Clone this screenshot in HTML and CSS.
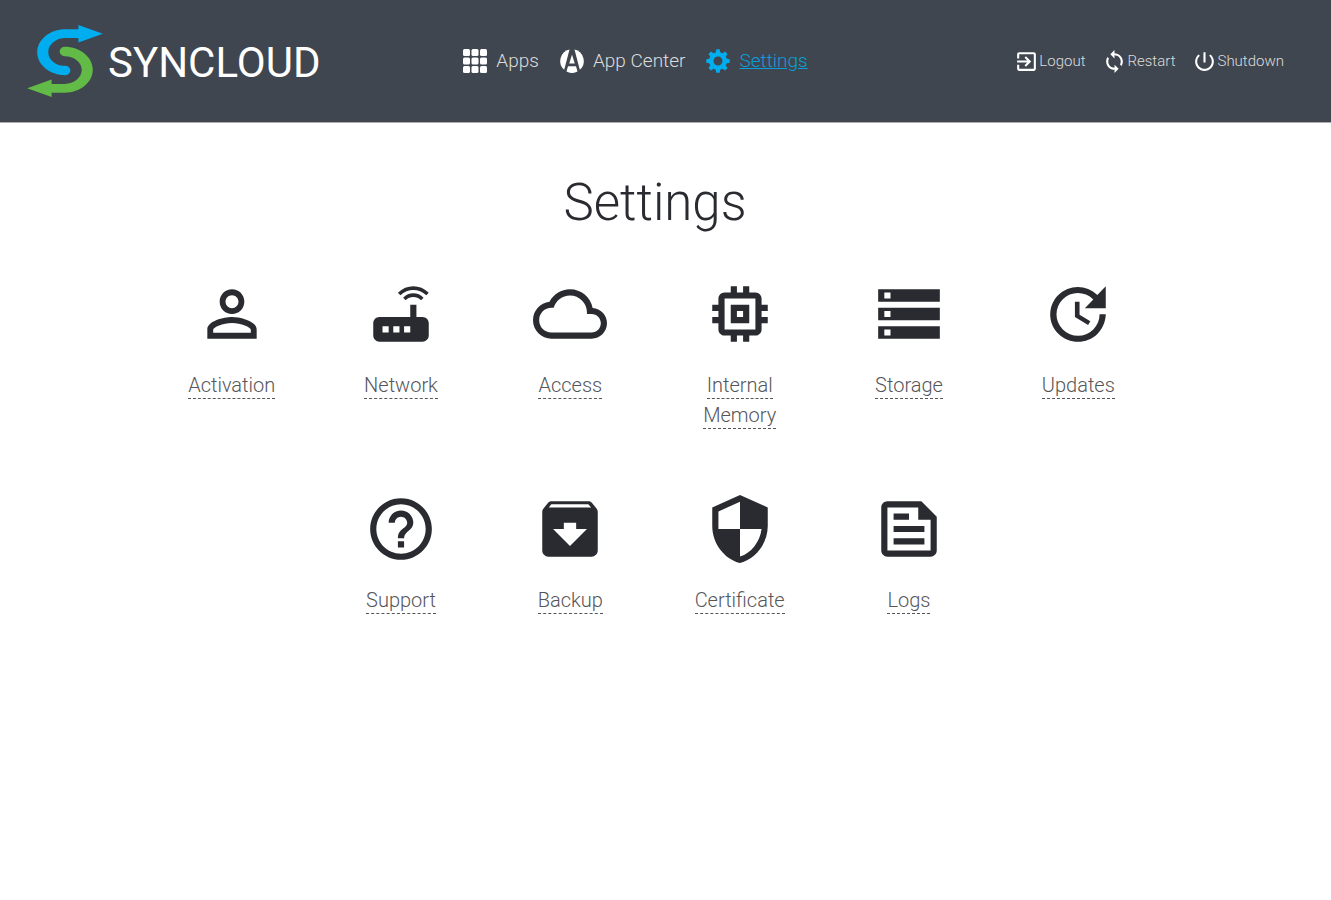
FILE: index.html
```html
<!DOCTYPE html>
<html lang="en">
<head>
<meta charset="utf-8">
<meta name="viewport" content="width=device-width, initial-scale=1">
<title>Settings - Syncloud</title>
<link rel="stylesheet" href="styles.css">
</head>
<body>
<header class="header">
  <a class="brand" href="#">
    <svg class="brand-mark" viewBox="51 75 226 215" aria-hidden="true">
      <path fill="#00aeef" d="M204 75 277 101 204 127V114H165C137 114 114 133 114 156S137 197 165 197A15 14 0 0 1 165 225C119 225 81 194 81 156.500S119 88 165 88H204Z"/>
      <path fill="#62bb46" transform="rotate(180 164 182.500)" d="M204 75 277 101 204 127V114H165C137 114 114 133 114 156S137 197 165 197A15 14 0 0 1 165 225C119 225 81 194 81 156.500S119 88 165 88H204Z"/>
    </svg>
    <span class="brand-name">SYNCLOUD</span>
  </a>
  <nav class="menu" aria-label="Main">
    <a class="menu-link" href="#">
      <svg class="menu-icon" viewBox="0 0 24 24" aria-hidden="true"><g fill="#fff"><rect x="0" y="0" width="7" height="7" rx="1.500"/><rect x="8.500" y="0" width="7" height="7" rx="1.500"/><rect x="17" y="0" width="7" height="7" rx="1.500"/><rect x="0" y="8.500" width="7" height="7" rx="1.500"/><rect x="8.500" y="8.500" width="7" height="7" rx="1.500"/><rect x="17" y="8.500" width="7" height="7" rx="1.500"/><rect x="0" y="17" width="7" height="7" rx="1.500"/><rect x="8.500" y="17" width="7" height="7" rx="1.500"/><rect x="17" y="17" width="7" height="7" rx="1.500"/></g></svg>
      <span>Apps</span>
    </a>
    <a class="menu-link" href="#">
      <svg class="menu-icon" viewBox="0 0 24 24" aria-hidden="true"><g fill="#fff"><path d="M9.500.500 4.200 20.800A11.800 11.800 0 0 1 9.500.500Z"/><path d="M14.500.500 19.800 20.800A11.800 11.800 0 0 0 14.500.500Z"/><path d="M12 5.500 14.800 14.500H9.200Z"/><path d="M8 17.200H16L17.500 22.600A12 12 0 0 1 6.500 22.600Z"/></g></svg>
      <span>App Center</span>
    </a>
    <a class="menu-link menu-link-active" href="#" aria-current="page">
      <svg class="menu-icon" viewBox="0 0 24 24" aria-hidden="true"><g fill="#00aeef"><path fill-rule="evenodd" d="M12 3a9 9 0 1 0 0 18a9 9 0 0 0 0-18Zm0 4.500a4.500 4.500 0 1 1 0 9a4.500 4.500 0 0 1 0-9Z"/><path id="tooth" d="M9.500 4.500 10.300.300H13.700L14.500 4.500Z"/><use href="#tooth" transform="rotate(45 12 12)"/><use href="#tooth" transform="rotate(90 12 12)"/><use href="#tooth" transform="rotate(135 12 12)"/><use href="#tooth" transform="rotate(180 12 12)"/><use href="#tooth" transform="rotate(225 12 12)"/><use href="#tooth" transform="rotate(270 12 12)"/><use href="#tooth" transform="rotate(315 12 12)"/></g></svg>
      <span>Settings</span>
    </a>
  </nav>
  <div class="actions">
    <button class="action" type="button">
      <svg class="action-icon" viewBox="0 0 24 24" aria-hidden="true"><path d="M10.090 15.590 11.500 17l5-5-5-5-1.410 1.410L12.670 11H3v2h9.670l-2.580 2.590zM19 3H5c-1.110 0-2 .9-2 2v4h2V5h14v14H5v-4H3v4c0 1.100.890 2 2 2h14c1.100 0 2-.9 2-2V5c0-1.100-.9-2-2-2z"/></svg>
      <span>Logout</span>
    </button>
    <button class="action" type="button">
      <svg class="action-icon" viewBox="0 0 24 24" aria-hidden="true"><path d="M12 4V1L8 5l4 4V6c3.310 0 6 2.690 6 6 0 1.010-.250 1.970-.7 2.800l1.460 1.460C19.540 15.030 20 13.570 20 12c0-4.420-3.580-8-8-8zm0 14c-3.310 0-6-2.690-6-6 0-1.010.250-1.970.7-2.800L5.240 7.740C4.460 8.970 4 10.430 4 12c0 4.420 3.580 8 8 8v3l4-4-4-4v3z"/></svg>
      <span>Restart</span>
    </button>
    <button class="action" type="button">
      <svg class="action-icon" viewBox="0 0 24 24" aria-hidden="true"><path d="M13 3h-2v10h2V3zm4.830 2.170-1.420 1.420C17.990 7.860 19 9.810 19 12c0 3.870-3.130 7-7 7s-7-3.130-7-7c0-2.190 1.010-4.140 2.580-5.420L6.170 5.170C4.230 6.820 3 9.260 3 12c0 4.970 4.030 9 9 9s9-4.030 9-9c0-2.740-1.230-5.180-3.170-6.830z"/></svg>
      <span>Shutdown</span>
    </button>
  </div>
</header>
<main class="content">
  <h1 class="title">Settings</h1>
  <div class="tiles">
    <a class="tile" href="#"><svg class="tile-icon" viewBox="0 0 24 24" aria-hidden="true"><path d="M12 5.900c1.160 0 2.100.940 2.100 2.100s-.940 2.100-2.100 2.100S9.900 9.160 9.900 8s.940-2.100 2.100-2.100m0 9c2.970 0 6.100 1.460 6.100 2.100v1.100H5.900V17c0-.640 3.130-2.100 6.100-2.100M12 4C9.790 4 8 5.790 8 8s1.790 4 4 4 4-1.790 4-4-1.790-4-4-4zm0 9c-2.670 0-8 1.340-8 4v3h16v-3c0-2.660-5.330-4-8-4z"/></svg><span class="tile-name"><span class="tile-text">Activation</span></span></a>
    <a class="tile" href="#"><svg class="tile-icon" viewBox="0 0 24 24" aria-hidden="true"><path d="m20.200 5.900.8-.8C19.600 3.700 17.800 3 16 3s-3.600.7-5 2.100l.8.8C13 4.800 14.500 4.200 16 4.200s3 .6 4.200 1.700zm-.9.8c-.9-.9-2.100-1.400-3.300-1.400s-2.400.5-3.300 1.400l.8.8c.7-.7 1.600-1 2.500-1s1.800.3 2.500 1l.8-.8zM19 13h-2V9h-2v4H5c-1.100 0-2 .9-2 2v4c0 1.100.9 2 2 2h14c1.100 0 2-.9 2-2v-4c0-1.100-.9-2-2-2zM8 18H6v-2h2v2zm3.500 0h-2v-2h2v2zm3.500 0h-2v-2h2v2z"/></svg><span class="tile-name"><span class="tile-text">Network</span></span></a>
    <a class="tile" href="#"><svg class="tile-icon" viewBox="0 0 24 24" aria-hidden="true"><path d="M19.350 10.040C18.670 6.590 15.640 4 12 4 9.110 4 6.600 5.640 5.350 8.040 2.340 8.360 0 10.910 0 14c0 3.310 2.690 6 6 6h13c2.760 0 5-2.240 5-5 0-2.640-2.050-4.780-4.650-4.960zM19 18H6c-2.210 0-4-1.790-4-4s1.790-4 4-4h.710C7.370 7.690 9.480 6 12 6c3.040 0 5.500 2.460 5.500 5.500v.5H19c1.660 0 3 1.340 3 3s-1.340 3-3 3z"/></svg><span class="tile-name"><span class="tile-text">Access</span></span></a>
    <a class="tile" href="#"><svg class="tile-icon" viewBox="0 0 24 24" aria-hidden="true"><path d="M15 9H9v6h6V9zm-2 4h-2v-2h2v2zm8-2V9h-2V7c0-1.100-.9-2-2-2h-2V3h-2v2h-2V3H9v2H7c-1.100 0-2 .9-2 2v2H3v2h2v2H3v2h2v2c0 1.100.9 2 2 2h2v2h2v-2h2v2h2v-2h2c1.100 0 2-.9 2-2v-2h2v-2h-2v-2h2zm-4 6H7V7h10v10z"/></svg><span class="tile-name"><span class="tile-text">Internal Memory</span></span></a>
    <a class="tile" href="#"><svg class="tile-icon" viewBox="0 0 24 24" aria-hidden="true"><path d="M2 20h20v-4H2v4zm2-3h2v2H4v-2zM2 4v4h20V4H2zm4 3H4V5h2v2zm-4 7h20v-4H2v4zm2-3h2v2H4v-2z"/></svg><span class="tile-name"><span class="tile-text">Storage</span></span></a>
    <a class="tile" href="#"><svg class="tile-icon" viewBox="0 0 24 24" aria-hidden="true"><path d="M21 10.120h-6.780l2.740-2.820c-2.730-2.700-7.150-2.800-9.880-.1-2.730 2.710-2.730 7.080 0 9.790s7.150 2.710 9.880 0C18.320 15.650 19 14.080 19 12.100h2c0 1.980-.880 4.550-2.640 6.290-3.510 3.480-9.210 3.480-12.720 0-3.500-3.470-3.530-9.110-.020-12.580s9.140-3.470 12.650 0L21 3v7.120zM12.500 8v4.250l3.500 2.080-.720 1.210L11 13V8h1.500z"/></svg><span class="tile-name"><span class="tile-text">Updates</span></span></a>
    <a class="tile" href="#"><svg class="tile-icon" viewBox="0 0 24 24" aria-hidden="true"><path d="M11 18h2v-2h-2v2zm1-16C6.480 2 2 6.480 2 12s4.480 10 10 10 10-4.480 10-10S17.520 2 12 2zm0 18c-4.410 0-8-3.590-8-8s3.590-8 8-8 8 3.590 8 8-3.590 8-8 8zm0-14c-2.210 0-4 1.790-4 4h2c0-1.100.9-2 2-2s2 .9 2 2c0 2-3 1.750-3 5h2c0-2.250 3-2.500 3-5 0-2.210-1.790-4-4-4z"/></svg><span class="tile-name"><span class="tile-text">Support</span></span></a>
    <a class="tile" href="#"><svg class="tile-icon" viewBox="0 0 24 24" aria-hidden="true"><path d="m20.540 5.230-1.390-1.680C18.880 3.210 18.470 3 18 3H6c-.470 0-.880.210-1.160.550L3.460 5.230C3.170 5.570 3 6.020 3 6.500V19c0 1.100.9 2 2 2h14c1.100 0 2-.9 2-2V6.500c0-.480-.170-.930-.460-1.270zM12 17.500 6.500 12H10v-2h4v2h3.500L12 17.500zM5.120 5l.810-1h12l.940 1H5.120z"/></svg><span class="tile-name"><span class="tile-text">Backup</span></span></a>
    <a class="tile" href="#"><svg class="tile-icon" viewBox="0 0 24 24" aria-hidden="true"><path d="M12 1 3 5v6c0 5.550 3.840 10.740 9 12 5.160-1.260 9-6.450 9-12V5l-9-4zm0 10.990h7c-.530 4.120-3.280 7.790-7 8.940V12H5V6.300l7-3.110v8.800z"/></svg><span class="tile-name"><span class="tile-text">Certificate</span></span></a>
    <a class="tile" href="#"><svg class="tile-icon" viewBox="0 0 24 24" aria-hidden="true"><path fill-rule="evenodd" d="M16 3H5C3.900 3 3 3.900 3 5v14c0 1.100.9 2 2 2h14c1.100 0 2-.9 2-2V8l-5-5zM19 19H5V5h10v4h4v10zM7 7h5v2H7V7zm0 4h10v2H7v-2zm0 4h10v2H7v-2z"/></svg><span class="tile-name"><span class="tile-text">Logs</span></span></a>
  </div>
</main>
</body>
</html>
```
FILE: styles.css
```css
* {
  box-sizing: border-box;
}

body {
  margin: 0;
  background: #fff;
  color: #2a2b30;
  font-family: Roboto, "Liberation Sans", sans-serif;
  font-weight: 300;
}

.header {
  display: grid;
  grid-template-columns: 1fr auto 1fr;
  align-items: center;
  min-height: 123px;
  padding: 0 47px 0 27px;
  border-bottom: 1px solid #acacb0;
  background: #40464f;
}

.brand {
  display: flex;
  align-items: center;
  gap: 5px;
  color: #fff;
  text-decoration: none;
}

.brand-mark {
  width: 76px;
  height: 72px;
}

.brand-name {
  font-size: 42px;
  font-weight: 400;
  line-height: 52px;
  padding-top: 4px;
}

.menu {
  display: flex;
  gap: 21px;
  margin-right: 40px;
}

.menu-link {
  display: flex;
  align-items: center;
  gap: 9px;
  color: #dcdcdc;
  font-size: 19px;
  line-height: 28px;
  text-decoration: none;
}

.menu-link-active {
  color: #089fdb;
  text-decoration: underline;
}

.menu-icon {
  width: 24px;
  height: 24px;
}

.actions {
  display: flex;
  justify-content: flex-end;
  gap: 17px;
}

.action {
  display: flex;
  align-items: center;
  padding: 0;
  border: 0;
  background: none;
  color: #dcdcdc;
  font: inherit;
  font-size: 15px;
  line-height: 24px;
  cursor: pointer;
}

.action-icon {
  width: 25px;
  height: 25px;
  fill: #fff;
}

.content {
  padding: 46px 21px 0 0;
}

.title {
  margin: 0;
  font-size: 51px;
  font-weight: 300;
  line-height: 68px;
  text-align: center;
}

.tiles {
  display: flex;
  flex-wrap: wrap;
  justify-content: center;
  max-width: 1016px;
  margin: 40px auto 0;
  row-gap: 62px;
}

.tile {
  display: flex;
  flex-direction: column;
  align-items: center;
  gap: 19px;
  width: calc(100% / 6);
  padding: 0 24px;
  color: #55565a;
  text-decoration: none;
}

.tile-icon {
  width: 74px;
  height: 74px;
  fill: #2a2b30;
}

.tile-name {
  font-size: 20px;
  line-height: 30px;
  text-align: center;
}

.tile-text {
  padding-bottom: 1px;
  border-bottom: 1px dashed #55565a;
}
```
